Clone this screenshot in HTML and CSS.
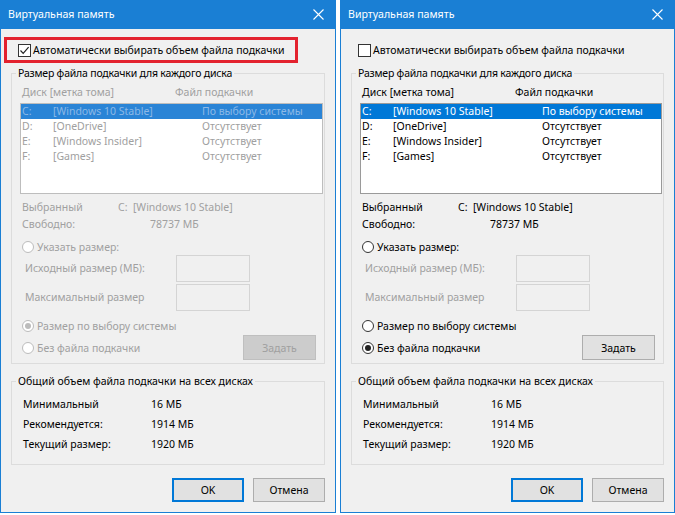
FILE: index.html
```html
<!DOCTYPE html>
<html lang="ru">
<head>
  <meta charset="UTF-8" />
  <title>Виртуальная память</title>
  <link rel="stylesheet" href="styles.css">
</head>
<body>

<div class="screen">

  <!-- автоматический режим: всё неактивно -->
  <div class="dialog dialog-left">
    <div class="titlebar">
      <span>Виртуальная память</span>
      <svg class="close" width="11" height="11" viewBox="0 0 11 11"><path d="M0.5 0.5 L10.5 10.5 M10.5 0.5 L0.5 10.5" stroke="#fff" stroke-width="1.1" fill="none"/></svg>
    </div>
    <div class="body">
      <div class="auto-row highlight">
        <span class="check"><svg width="11" height="11" viewBox="0 0 11 11"><path d="M1.5 5.5 L4.2 8.3 L9.6 2.2" stroke="#222" stroke-width="1.2" fill="none"/></svg></span>
        <span>Автоматически выбирать объем файла подкачки</span>
      </div>

      <fieldset class="group group-disk">
        <legend>Размер файла подкачки для каждого диска</legend>
        <div class="list-head off"><span class="col-drive">Диск [метка тома]</span><span>Файл подкачки</span></div>
        <div class="listbox off">
          <div class="list-row selected"><span class="col-letter">C:</span><span class="col-label">[Windows 10 Stable]</span><span>По выбору системы</span></div>
          <div class="list-row"><span class="col-letter">D:</span><span class="col-label">[OneDrive]</span><span>Отсутствует</span></div>
          <div class="list-row"><span class="col-letter">E:</span><span class="col-label">[Windows Insider]</span><span>Отсутствует</span></div>
          <div class="list-row"><span class="col-letter">F:</span><span class="col-label">[Games]</span><span>Отсутствует</span></div>
        </div>
        <div class="info-row off first"><span class="key-short">Выбранный</span><span>C:&nbsp;&nbsp;[Windows 10 Stable]</span></div>
        <div class="info-row off"><span class="key-long">Свободно:</span><span>78737 МБ</span></div>

        <div class="radio-row off first"><span class="radio"></span><span>Указать размер:</span></div>
        <div class="size-row off first"><span class="size-label">Исходный размер (МБ):</span><span class="input"></span></div>
        <div class="size-row off"><span class="size-label">Максимальный размер</span><span class="input"></span></div>
        <div class="radio-row off system"><span class="radio on"></span><span>Размер по выбору системы</span></div>
        <div class="last-row">
          <div class="radio-row off"><span class="radio"></span><span>Без файла подкачки</span></div>
          <span class="btn btn-set disabled">Задать</span>
        </div>
      </fieldset>

      <fieldset class="group group-total">
        <legend>Общий объем файла подкачки на всех дисках</legend>
        <div class="total-row"><span class="key-long">Минимальный</span><span>16 МБ</span></div>
        <div class="total-row"><span class="key-long">Рекомендуется:</span><span>1914 МБ</span></div>
        <div class="total-row"><span class="key-long">Текущий размер:</span><span>1920 МБ</span></div>
      </fieldset>

      <div class="actions">
        <span class="btn btn-default">OK</span>
        <span class="btn">Отмена</span>
      </div>
    </div>
  </div>

  <!-- ручной режим -->
  <div class="dialog dialog-right">
    <div class="titlebar">
      <span>Виртуальная память</span>
      <svg class="close" width="11" height="11" viewBox="0 0 11 11"><path d="M0.5 0.5 L10.5 10.5 M10.5 0.5 L0.5 10.5" stroke="#fff" stroke-width="1.1" fill="none"/></svg>
    </div>
    <div class="body">
      <div class="auto-row">
        <span class="check"></span>
        <span>Автоматически выбирать объем файла подкачки</span>
      </div>

      <fieldset class="group group-disk">
        <legend>Размер файла подкачки для каждого диска</legend>
        <div class="list-head"><span class="col-drive">Диск [метка тома]</span><span>Файл подкачки</span></div>
        <div class="listbox">
          <div class="list-row selected"><span class="col-letter">C:</span><span class="col-label">[Windows 10 Stable]</span><span>По выбору системы</span></div>
          <div class="list-row"><span class="col-letter">D:</span><span class="col-label">[OneDrive]</span><span>Отсутствует</span></div>
          <div class="list-row"><span class="col-letter">E:</span><span class="col-label">[Windows Insider]</span><span>Отсутствует</span></div>
          <div class="list-row"><span class="col-letter">F:</span><span class="col-label">[Games]</span><span>Отсутствует</span></div>
        </div>
        <div class="info-row first"><span class="key-short">Выбранный</span><span>C:&nbsp;&nbsp;[Windows 10 Stable]</span></div>
        <div class="info-row"><span class="key-long">Свободно:</span><span>78737 МБ</span></div>

        <div class="radio-row first"><span class="radio"></span><span>Указать размер:</span></div>
        <div class="size-row off first"><span class="size-label">Исходный размер (МБ):</span><span class="input"></span></div>
        <div class="size-row off"><span class="size-label">Максимальный размер</span><span class="input"></span></div>
        <div class="radio-row system"><span class="radio"></span><span>Размер по выбору системы</span></div>
        <div class="last-row">
          <div class="radio-row"><span class="radio on"></span><span>Без файла подкачки</span></div>
          <span class="btn btn-set">Задать</span>
        </div>
      </fieldset>

      <fieldset class="group group-total">
        <legend>Общий объем файла подкачки на всех дисках</legend>
        <div class="total-row"><span class="key-long">Минимальный</span><span>16 МБ</span></div>
        <div class="total-row"><span class="key-long">Рекомендуется:</span><span>1914 МБ</span></div>
        <div class="total-row"><span class="key-long">Текущий размер:</span><span>1920 МБ</span></div>
      </fieldset>

      <div class="actions">
        <span class="btn btn-default">OK</span>
        <span class="btn">Отмена</span>
      </div>
    </div>
  </div>

</div>

</body>
</html>
```

FILE: styles.css
```css
* {
  box-sizing: border-box;
}

html, body {
  margin: 0;
  padding: 0;
  background: #fff;
  font-family: 'Noto Sans', 'Open Sans', sans-serif;
  font-size: 10.5px;
  color: #000;
}

.screen {
  display: flex;
  gap: 4px;
  width: 675px;
  height: 515px;
}

.dialog {
  height: 513px;
  border: 1px solid #1a7fd4;
  border-top: none;
  background: #f0f0f0;
  display: flex;
  flex-direction: column;
}

.dialog-left  { width: 336px; }
.dialog-right { width: 335px; }

.titlebar {
  height: 29px;
  background: #1a7fd4;
  color: #fff;
  font-size: 10.6px;
  display: flex;
  align-items: center;
  justify-content: space-between;
  padding: 0 11px 1px 7px;
}

.close {
  display: block;
}

.body {
  padding: 8px 10px 0;
}

/* чекбокс "автоматически" */
.auto-row {
  display: flex;
  align-items: center;
  height: 26px;
  width: 294px;
  margin-left: -7px;
  padding-left: 11px;
  border: 3px solid transparent;
  white-space: nowrap;
}

.auto-row.highlight {
  border-color: #e3222e;
}

.check {
  width: 13px;
  height: 13px;
  border: 1px solid #333;
  background: #fff;
  margin-right: 2px;
  display: flex;
  align-items: center;
  justify-content: center;
}

.check svg { display: block; }

/* группы */
.group {
  margin: 2px 0 0;
  padding: 0 1px 3px 8px;
  border: 1px solid #dcdcdc;
  min-width: 0;
}

.group legend {
  margin-left: -4px;
  padding: 0 2px;
  line-height: 16px;
}

.group-disk legend {
  letter-spacing: -0.2px;
}

.group-total {
  margin-top: 9px;
  padding-bottom: 10px;
}

.off {
  color: #a0a0a0;
}

.list-head {
  display: flex;
  height: 16px;
  line-height: 16px;
  margin: 3px 0 0 2px;
}

.col-drive { width: 153px; }

.listbox {
  margin-top: 3px;
  height: 91px;
  border: 1px solid #9a9a9a;
  background: #fff;
  padding: 0;
  color: #000;
}

.listbox.off {
  border-color: #bdbdbd;
  color: #a0a0a0;
}

.list-row {
  display: flex;
  height: 15px;
  line-height: 15px;
  padding-left: 1px;
}

.list-row.selected {
  background: #0078d7;
  color: #fff;
}

.listbox.off .list-row.selected {
  background: #2a84d6;
  color: #8db9e6;
}

.col-letter { width: 31px; }
.col-label  { width: 149px; }

.info-row {
  display: flex;
  height: 17px;
  line-height: 17px;
  margin-left: 2px;
}

.info-row.first { margin-top: 5px; }

.key-short { width: 96px; }
.key-long  { width: 128px; }

/* переключатели */
.radio-row {
  display: flex;
  align-items: center;
  height: 16px;
  margin-left: 2px;
}

.radio-row.first  { margin-top: 6px; }
.radio-row.system { margin-top: 8px; }

.radio {
  width: 12px;
  height: 12px;
  border: 1px solid #333;
  border-radius: 50%;
  background: #fff;
  margin-right: 3px;
  display: flex;
  align-items: center;
  justify-content: center;
}

.radio.on::after {
  content: '';
  width: 6px;
  height: 6px;
  border-radius: 50%;
  background: #222;
}

.radio-row.off .radio {
  border-color: #bcbcbc;
}

.radio-row.off .radio.on::after {
  background: #bcbcbc;
}

.size-row {
  display: flex;
  align-items: center;
  height: 26px;
  margin-left: 5px;
}

.size-row + .size-row { margin-top: 3px; }

.size-label { width: 151px; }

.input {
  width: 74px;
  height: 27px;
  border: 1px solid #d4d4d4;
  background: #f0f0f0;
}

.last-row {
  display: flex;
  align-items: center;
  justify-content: space-between;
  height: 25px;
  margin-top: 1px;
  padding-right: 7px;
}

/* кнопки */
.btn {
  display: flex;
  align-items: center;
  justify-content: center;
  width: 72px;
  height: 24px;
  background: #e1e1e1;
  border: 1px solid #adadad;
}

.btn-set {
  width: 73px;
  height: 25px;
}

.btn.disabled {
  background: #cccccc;
  border-color: #bfbfbf;
  color: #a0a0a0;
}

.btn-default {
  border: 2px solid #0078d7;
}

.total-row {
  display: flex;
  height: 20px;
  line-height: 20px;
  margin-left: 3px;
}

.total-row:first-of-type { margin-top: 5px; }

.actions {
  display: flex;
  justify-content: flex-end;
  gap: 9px;
  margin-top: 13px;
}
```
